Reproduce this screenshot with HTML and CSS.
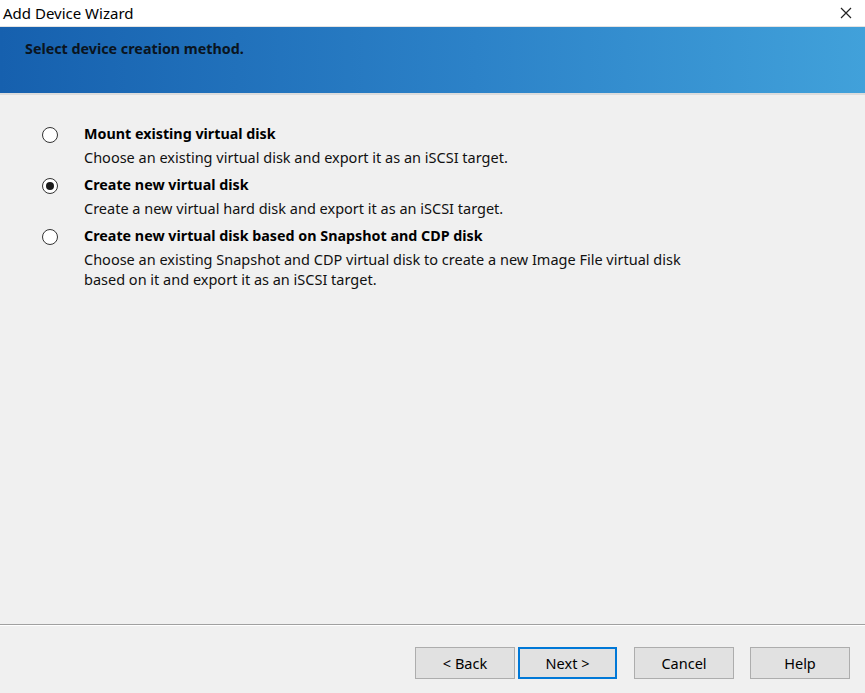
FILE: index.html
```html
<!DOCTYPE html>
<html lang="en">
<head>
    <meta charset="UTF-8">
    <meta name="viewport" content="width=device-width, initial-scale=1.0">
    <title>Add Device Wizard</title>
    <link rel="stylesheet" href="styles.css">
</head>
<body>
    <div class="window">
        <div class="titlebar">
            <span class="title">Add Device Wizard</span>
            <span class="close">
                <svg width="12" height="12" viewBox="0 0 12 12"><path d="M1 1L11 11M11 1L1 11" stroke="#222" stroke-width="1.2"/></svg>
            </span>
        </div>
        <div class="banner">
            <h1>Select device creation method.</h1>
        </div>

        <div class="content">
            <!-- creation methods -->
            <label class="option">
                <input type="radio" name="method">
                <span class="radio"></span>
                <span class="text">
                    <span class="name">Mount existing virtual disk</span>
                    <span class="desc">Choose an existing virtual disk and export it as an iSCSI target.</span>
                </span>
            </label>
            <label class="option">
                <input type="radio" name="method" checked>
                <span class="radio"></span>
                <span class="text">
                    <span class="name">Create new virtual disk</span>
                    <span class="desc">Create a new virtual hard disk and export it as an iSCSI target.</span>
                </span>
            </label>
            <label class="option">
                <input type="radio" name="method">
                <span class="radio"></span>
                <span class="text">
                    <span class="name">Create new virtual disk based on Snapshot and CDP disk</span>
                    <span class="desc">Choose an existing Snapshot and CDP virtual disk to create a new Image File virtual disk<br>based on it and export it as an iSCSI target.</span>
                </span>
            </label>
        </div>

        <div class="footer">
            <div class="nav">
                <button>&lt; Back</button>
                <button class="default">Next &gt;</button>
            </div>
            <button>Cancel</button>
            <button>Help</button>
        </div>
    </div>
</body>
</html>
```

FILE: styles.css
```css
body {
    margin: 0;
    font-family: "Noto Sans", "Open Sans", sans-serif;
    font-size: 14px;
    color: #000;
    background-color: #f0f0f0;
}
.window {
    display: flex;
    flex-direction: column;
    height: 693px;
    background-color: #f0f0f0;
}
.titlebar {
    display: flex;
    align-items: center;
    justify-content: space-between;
    height: 26px;
    padding: 0 13px 0 3px;
    background-color: #fff;
    border-bottom: 1px solid #e3e3e3;
}
.title {
    font-size: 15px;
}
.close {
    display: flex;
}
.banner {
    height: 66px;
    padding: 0 25px;
    background: linear-gradient(to right, #1660ae, #2c82c8 55%, #41a1da);
    border-bottom: 2px solid #dcdcdc;
}
.banner h1 {
    margin: 0;
    padding-top: 12px;
    font-size: 14.3px;
    font-weight: bold;
    color: #0a1420;
}
.content {
    flex: 1;
    padding: 29px 0 0 42px;
    border-bottom: 1px solid #a0a0a0;
    box-shadow: 0 1px 0 #fff;
}
.option {
    display: flex;
    margin-bottom: 8px;
}
.option input {
    display: none;
}
.radio {
    width: 16px;
    height: 16px;
    margin: 3px 26px 0 0;
    border: 1px solid #333;
    border-radius: 50%;
    background-color: #fff;
    box-sizing: border-box;
    position: relative;
}
.option input:checked + .radio::after {
    content: "";
    position: absolute;
    left: 3px;
    top: 3px;
    width: 8px;
    height: 8px;
    border-radius: 50%;
    background-color: #1a1a1a;
}
.text {
    display: flex;
    flex-direction: column;
    line-height: 20px;
    font-size: 14.5px;
}
.name {
    font-weight: bold;
    font-size: 14.3px;
    margin-bottom: 3px;
}
.desc {
    color: #111;
}
.footer {
    display: flex;
    justify-content: flex-end;
    gap: 16px;
    height: 68px;
    padding: 22px 15px 0 0;
    box-sizing: border-box;
    align-items: flex-start;
}
.nav {
    display: flex;
    gap: 3px;
    margin-right: 1px;
}
button {
    width: 100px;
    height: 32px;
    padding: 0;
    border: 1px solid #adadad;
    background-color: #e1e1e1;
    font-family: inherit;
    font-size: 14.5px;
    color: #000;
}
button.default {
    width: 99px;
    border: 2px solid #0078d7;
}
```
